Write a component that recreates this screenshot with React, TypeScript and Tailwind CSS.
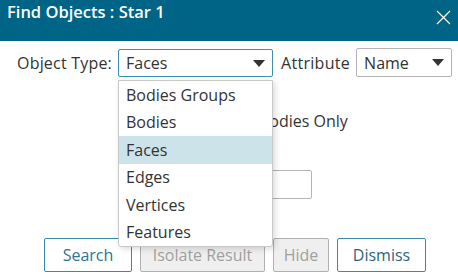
import React from 'react';

const options = ['Bodies Groups', 'Bodies', 'Faces', 'Edges', 'Vertices', 'Features'];

function Caret() {
    return (
        <svg width="12" height="7" viewBox="0 0 12 7" className="shrink-0">
            <path d="M0 0 H12 L6 7 Z" fill="#333" />
        </svg>
    );
}

export default function App() {
    const selected = 'Faces';

    return (
        <div className="w-[458px] h-[278px] bg-white text-[16px] text-[#333] overflow-hidden" style={{ fontFamily: '"Open Sans", "Noto Sans", sans-serif' }}>
            <div className="h-[41px] bg-[#006487] flex items-start justify-between pl-[7px] pr-[7px] pt-[1px]">
                <h1 className="text-white text-[16.5px] font-semibold leading-[22px]">Find Objects : Star 1</h1>
                <button className="mt-[9px]">
                    <svg width="15" height="15" viewBox="0 0 15 15">
                        <path d="M1 1 L14 14 M14 1 L1 14" stroke="#fff" strokeWidth="1.2" />
                    </svg>
                </button>
            </div>

            <div className="relative">
                <div className="flex items-center pl-[17px] pt-[8px]">
                    <span className="leading-[28px] tracking-[0.2px]">Object Type:</span>
                    <div className="relative ml-[6px]">
                        <div className="w-[155px] h-[28px] border border-[#3d90b0] rounded-[2px] flex items-center justify-between pl-[7px] pr-[7px]">
                            <span>{selected}</span>
                            <Caret />
                        </div>
                        <div className="absolute left-0 top-[31px] w-[155px] bg-white border border-[#c8c8c8] rounded-b-[3px] shadow-[2px_2px_6px_rgba(0,0,0,0.15)] z-10">
                            {options.map((o) => (
                                <div key={o} className={`h-[27.5px] flex items-center pl-[7px] ${o === selected ? 'bg-[#cce3ea]' : ''}`}>
                                    {o}
                                </div>
                            ))}
                        </div>
                    </div>
                    <span className="ml-[8px] leading-[28px] tracking-[0.3px]">Attribute</span>
                    <div className="ml-[6px] w-[96px] h-[29px] border border-[#b4b4b4] rounded-[2px] flex items-center justify-between pl-[7px] pr-[7px] -mt-[1px]">
                        <span>Name</span>
                        <Caret />
                    </div>
                </div>

                <div className="flex items-center pl-[239px] mt-[30px] h-[28px]">
                    <input type="checkbox" className="w-[14px] h-[14px] mr-[6px]" />
                    <span>Bodies Only</span>
                </div>

                <div className="flex items-center pl-[177px] mt-[35px]">
                    <span className="mr-[8px]">Count</span>
                    <div className="w-[82px] h-[29px] border border-[#b4b4b4] rounded-[2px]" />
                </div>

                <div className="flex items-center pl-[44px] mt-[39px] gap-[8px]">
                    <button className="w-[88px] h-[34px] border border-[#3d88a8] rounded-[2px] text-[#2f7495] bg-white">Search</button>
                    <button className="w-[125px] h-[34px] border border-[#b0b0b0] rounded-[2px] text-[#a0a0a0] bg-[#efefef]">Isolate Result</button>
                    <button className="w-[56px] h-[34px] border border-[#b0b0b0] rounded-[2px] text-[#a0a0a0] bg-[#efefef]">Hide</button>
                    <button className="w-[89px] h-[34px] border border-[#3d88a8] rounded-[2px] text-[#2f6480] bg-white">Dismiss</button>
                </div>
            </div>
        </div>
    );
}
